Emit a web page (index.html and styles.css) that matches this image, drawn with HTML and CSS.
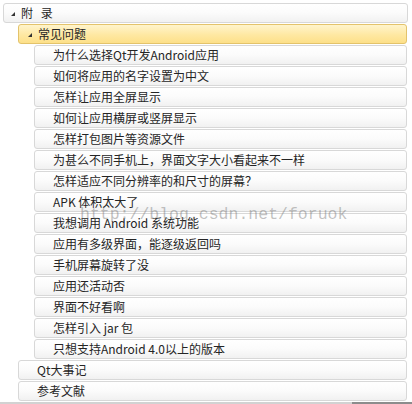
FILE: index.html
```html
<!DOCTYPE html>
<html lang="zh">
<head>
<meta charset="utf-8">
<link rel="stylesheet" href="styles.css">
</head>
<body>
<div class="view">
  <div class="tree">
    <div class="row l0"><span class="tri"></span><span class="label spaced">附 录</span></div>
    <div class="row l1 sel"><span class="tri"></span><span class="label">常见问题</span></div>
    <div class="row l2"><span class="label">为什么选择Qt开发Android应用</span></div>
    <div class="row l2"><span class="label">如何将应用的名字设置为中文</span></div>
    <div class="row l2"><span class="label">怎样让应用全屏显示</span></div>
    <div class="row l2"><span class="label">如何让应用横屏或竖屏显示</span></div>
    <div class="row l2"><span class="label">怎样打包图片等资源文件</span></div>
    <div class="row l2"><span class="label">为甚么不同手机上，界面文字大小看起来不一样</span></div>
    <div class="row l2"><span class="label">怎样适应不同分辨率的和尺寸的屏幕？</span></div>
    <div class="row l2"><span class="label">APK 体积太大了</span></div>
    <div class="row l2"><span class="label">我想调用 Android 系统功能</span></div>
    <div class="row l2"><span class="label">应用有多级界面，能逐级返回吗</span></div>
    <div class="row l2"><span class="label">手机屏幕旋转了没</span></div>
    <div class="row l2"><span class="label">应用还活动否</span></div>
    <div class="row l2"><span class="label">界面不好看啊</span></div>
    <div class="row l2"><span class="label">怎样引入 jar 包</span></div>
    <div class="row l2"><span class="label">只想支持Android 4.0以上的版本</span></div>
    <div class="row l1 leaf"><span class="label">Qt大事记</span></div>
    <div class="row l1 leaf"><span class="label">参考文献</span></div>
  </div>
  <div class="hscroll"><div class="thumb"></div></div>
  <div class="watermark">http://blog.csdn.net/foruok</div>
</div>
</body>
</html>
```

FILE: styles.css
```css
html, body {
  margin: 0;
  padding: 0;
  background: #ffffff;
}

.view {
  position: relative;
  width: 412px;
  height: 404px;
  overflow: hidden;
  font-family: "Noto Sans CJK SC", "Noto Sans", sans-serif;
  font-size: 12px;
  color: #252525;
}

.tree {
  display: flex;
  flex-direction: column;
  gap: 1px;
  padding-top: 3px;
}

.row {
  display: flex;
  align-items: center;
  box-sizing: border-box;
  height: 20px;
  margin-right: 5px;
  border: 1px solid #d8d8d8;
  border-radius: 3px;
  background: linear-gradient(#ffffff, #fbfbfb 50%, #f1f1f1);
  white-space: nowrap;
}

.label {
  line-height: 18px;
}

.spaced {
  word-spacing: 5px;
}

.l0 {
  margin-left: 3px;
  margin-right: 4px;
  padding-left: 7px;
}

.l1 {
  margin-left: 18px;
  padding-left: 9px;
}

.l1.leaf {
  padding-left: 18px;
}

.l2 {
  margin-left: 34px;
  padding-left: 18px;
}

.sel {
  border-color: #e3c36b;
  background: linear-gradient(#fff4cc, #fee8a2 55%, #fde089);
}

.tri {
  width: 0;
  height: 0;
  border-style: solid;
  border-width: 0 0 4px 4px;
  border-color: transparent transparent #333333 transparent;
  margin-right: 6px;
  margin-top: 1px;
}

.hscroll {
  display: flex;
  margin-top: 1px;
  height: 2px;
  background: #d2d2d2;
}

.thumb {
  margin-left: 352px;
  flex: 1;
  background: #8c8c8c;
}

.watermark {
  position: absolute;
  left: 80px;
  top: 205px;
  font-family: "Liberation Mono", monospace;
  font-size: 16.5px;
  line-height: 20px;
  color: rgba(110, 110, 110, 0.42);
  white-space: nowrap;
  pointer-events: none;
}
```
